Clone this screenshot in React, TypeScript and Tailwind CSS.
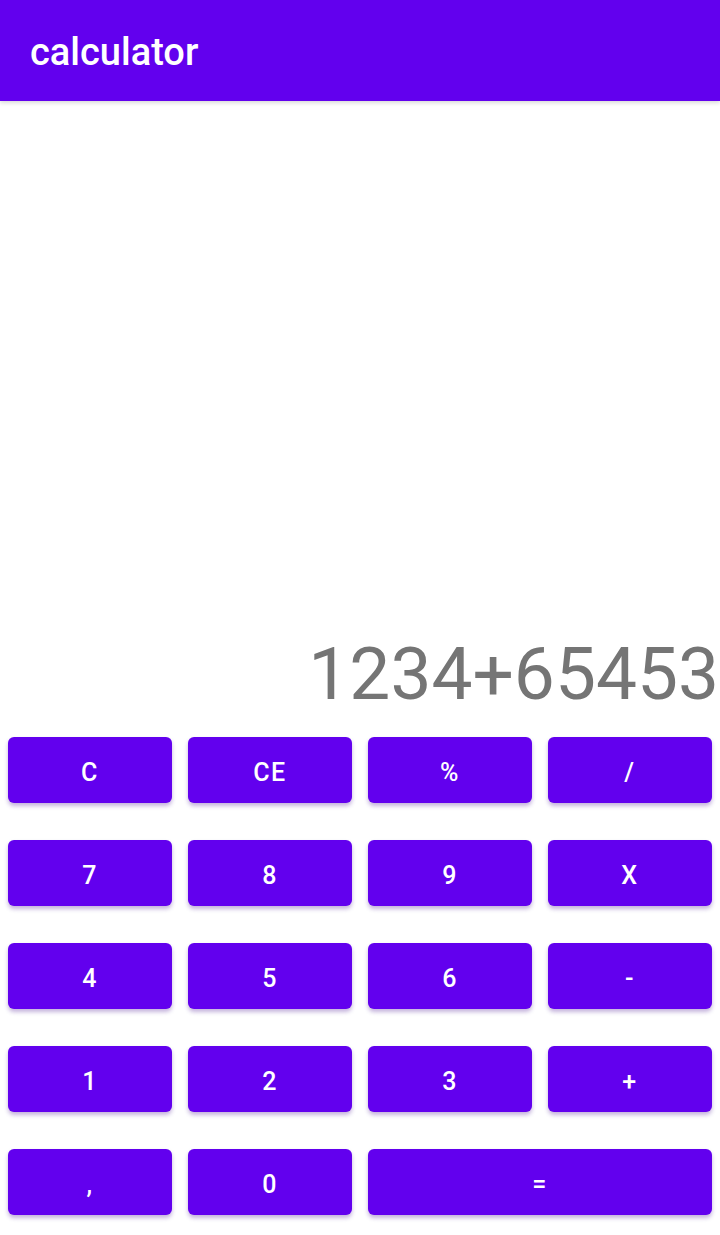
const KEYS = [
  { label: "C" },
  { label: "CE" },
  { label: "%" },
  { label: "/" },
  { label: "7" },
  { label: "8" },
  { label: "9" },
  { label: "X" },
  { label: "4" },
  { label: "5" },
  { label: "6" },
  { label: "-" },
  { label: "1" },
  { label: "2" },
  { label: "3" },
  { label: "+" },
  { label: "," },
  { label: "0" },
  { label: "=", wide: true },
];

const App = () => {
  return (
    <div className="flex h-[1235px] w-[720px] flex-col bg-white font-['Roboto',sans-serif]">
      {/* Toolbar */}
      <header className="flex h-[101px] shrink-0 items-center bg-[#6200ee] px-[30px] shadow-[0_2px_4px_rgba(0,0,0,0.15)]">
        <h1 className="pt-[3px] text-[38px] font-medium text-white">calculator</h1>
      </header>

      {/* Display */}
      <div className="flex flex-1 items-end justify-end">
        <p className="mb-[21px] pr-[1px] text-[73px] leading-[84px] text-[#757575]">
          1234+65453
        </p>
      </div>

      {/* Keypad */}
      <div className="grid grid-cols-4 gap-x-4 gap-y-[37px] px-2 pb-[20px]">
        {KEYS.map((key, idx) => (
          <button
            key={idx}
            className={`flex h-[66px] items-center justify-center rounded-[6px] bg-[#6200ee] pt-[5px] text-[25px] font-medium tracking-[0.06em] text-white shadow-[0_3px_4px_rgba(60,0,140,0.3)] ${
              key.wide ? "col-span-2" : ""
            }`}
          >
            {key.label}
          </button>
        ))}
      </div>
    </div>
  );
};

export default App;
